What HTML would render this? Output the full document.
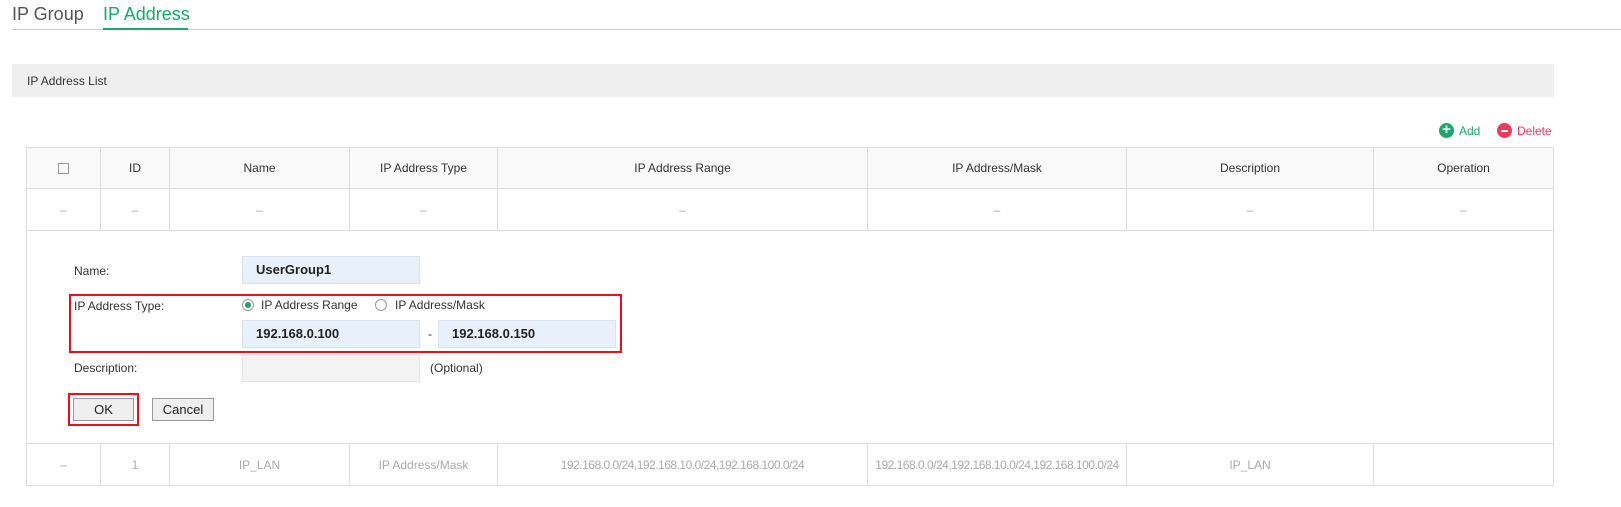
<!DOCTYPE html>
<html><head><style>
*{box-sizing:border-box;margin:0;padding:0}
body{width:1621px;height:507px;background:#fff;font-family:"Liberation Sans",sans-serif;position:relative;overflow:hidden;color:#333}
.a{position:absolute}
.t{font-size:12px;white-space:nowrap}
table{position:absolute;left:26px;top:147px;width:1528px;border-collapse:collapse;font-size:12px}
td{border:1px solid #ddd;text-align:center;color:#333}
.h td{background:#f9f9f9;height:41px}
.r td{height:42px;color:#aaa}
.cond{letter-spacing:-0.5px}
.inp{position:absolute;height:28px;width:178px;background:#e8f0fb;border:1px solid #dde3ea;font-size:13px;font-weight:bold;padding-left:13px;line-height:26px;color:#222}
.btn{position:absolute;height:23px;background:#efefef;border:1px solid #999;font-size:13px;text-align:center;line-height:21px;color:#222}
</style></head><body>
<div class="a" style="left:12px;top:4px;font-size:18px;color:#555">IP Group</div>
<div class="a" style="left:103px;top:4px;font-size:18px;color:#1aa86a">IP Address</div>
<div class="a" style="left:12px;top:29px;width:1609px;height:1px;background:#ccc"></div>
<div class="a" style="left:103px;top:28px;width:85px;height:2px;background:#1aa86a"></div>
<div class="a" style="left:12px;top:64px;width:1542px;height:33px;background:#efefef"></div>
<div class="a t" style="left:27px;top:74px;color:#333">IP Address List</div>
<div class="a" style="left:1439px;top:123px;width:15px;height:15px;border-radius:50%;background:#1aa86a;color:#fff;font-size:15px;line-height:14px;text-align:center;font-weight:bold">+</div>
<div class="a t" style="left:1459px;top:124px;color:#1aa86a">Add</div>
<div class="a" style="left:1497px;top:123px;width:15px;height:15px;border-radius:50%;background:#ef3b5a"><div class="a" style="left:4px;top:6.5px;width:7px;height:2px;background:#fff"></div></div>
<div class="a t" style="left:1517px;top:124px;color:#ef3b5a">Delete</div>
<table>
<tr class="h"><td style="width:74px"><span style="display:inline-block;width:11px;height:11px;border:1px solid #999;vertical-align:middle"></span></td><td style="width:69px">ID</td><td style="width:180px">Name</td><td style="width:148px">IP Address Type</td><td style="width:370px">IP Address Range</td><td style="width:259px">IP Address/Mask</td><td style="width:247px">Description</td><td>Operation</td></tr>
<tr class="r"><td>–</td><td>–</td><td>–</td><td>–</td><td>–</td><td>–</td><td>–</td><td>–</td></tr>
<tr><td colspan="8" style="height:213px"></td></tr>
<tr class="r"><td>–</td><td>1</td><td>IP_LAN</td><td>IP Address/Mask</td><td class="cond">192.168.0.0/24,192.168.10.0/24,192.168.100.0/24</td><td class="cond">192.168.0.0/24,192.168.10.0/24,192.168.100.0/24</td><td>IP_LAN</td><td></td></tr>
</table>
<div class="a t" style="left:74px;top:264px">Name:</div>
<div class="inp" style="left:242px;top:256px">UserGroup1</div>
<div class="a" style="left:69px;top:294px;width:553px;height:59px;border:2px solid #e0141e"></div>
<div class="a t" style="left:74px;top:299px">IP Address Type:</div>
<div class="a" style="left:242px;top:299px;width:12px;height:12px;border-radius:50%;border:1px solid #999;background:#fff"><div class="a" style="left:2px;top:2px;width:6px;height:6px;border-radius:50%;background:#1aa86a"></div></div>
<div class="a t" style="left:261px;top:298px">IP Address Range</div>
<div class="a" style="left:375px;top:299px;width:12px;height:12px;border-radius:50%;border:1px solid #999"></div>
<div class="a t" style="left:395px;top:298px">IP Address/Mask</div>
<div class="inp" style="left:242px;top:320px">192.168.0.100</div>
<div class="a t" style="left:428px;top:327px">-</div>
<div class="inp" style="left:438px;top:320px">192.168.0.150</div>
<div class="a t" style="left:74px;top:361px">Description:</div>
<div class="inp" style="left:242px;top:354px;background:#f3f3f3;border-color:#e3e3e3"></div>
<div class="a t" style="left:430px;top:361px">(Optional)</div>
<div class="a" style="left:68px;top:393px;width:71px;height:33px;border:2px solid #e0141e"></div>
<div class="btn" style="left:73px;top:398px;width:61px">OK</div>
<div class="btn" style="left:152px;top:398px;width:62px">Cancel</div>
</body></html>
